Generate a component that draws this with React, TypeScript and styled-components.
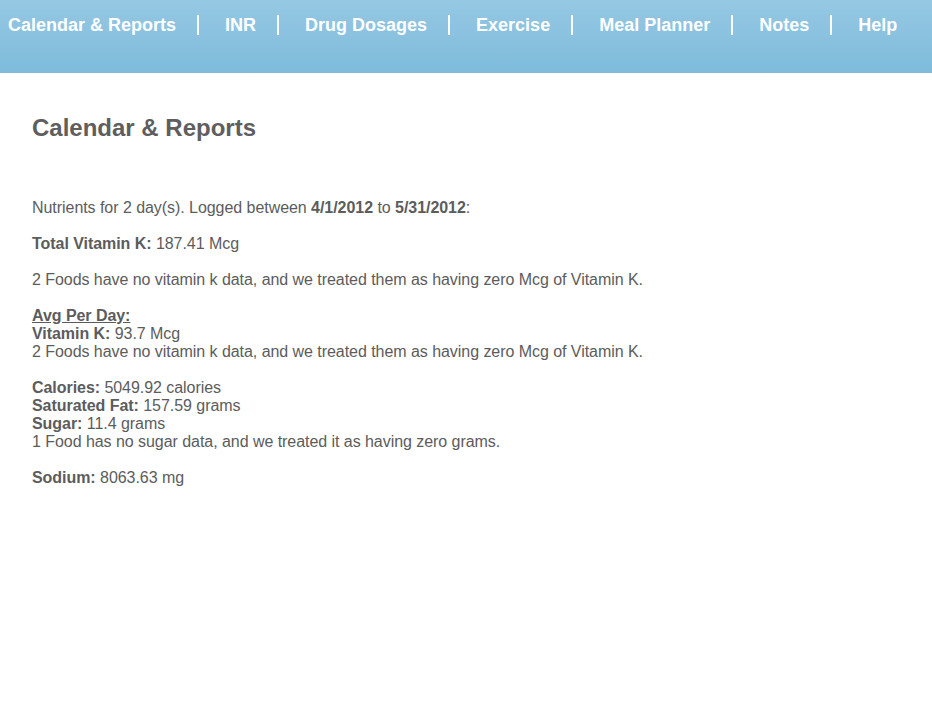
import React from "react";
import styled, { createGlobalStyle } from "styled-components";

const Global = createGlobalStyle`
  html, body { margin: 0; padding: 0; background: #ffffff; }
  body { font-family: "Liberation Sans", Arial, Helvetica, sans-serif; }
`;

const Header = styled.header`
  height: 73px;
  background: linear-gradient(to bottom, #95c8e3 0%, #7ebbdb 100%);
  box-sizing: border-box;
  padding: 15px 0 0 8px;
`;

const Nav = styled.nav`
  display: flex;
  align-items: center;
  height: 20px;
`;

const NavItem = styled.a`
  color: #ffffff;
  font-size: 18px;
  font-weight: bold;
  line-height: 20px;
  text-decoration: none;
  white-space: nowrap;
`;

const Sep = styled.span`
  display: block;
  width: 2px;
  height: 20px;
  background: rgba(255, 255, 255, 0.95);
  margin: 0 26px 0 21px;
`;

const Content = styled.main`
  padding: 41px 32px 0 32px;
  color: #5c5c5c;
`;

const Title = styled.h1`
  margin: 0 0 57px 0;
  font-size: 24px;
  line-height: 28px;
  font-weight: bold;
  color: #5e5e5e;
`;

const Block = styled.div`
  font-size: 16px;
  line-height: 18px;
  margin-bottom: 18px;
  letter-spacing: -0.05px;
`;

const Line = styled.div``;

const Label = styled.b<{ $underline?: boolean }>`
  font-weight: bold;
  text-decoration: ${(p) => (p.$underline ? "underline" : "none")};
`;

const navItems = [
  "Calendar & Reports",
  "INR",
  "Drug Dosages",
  "Exercise",
  "Meal Planner",
  "Notes",
  "Help",
];

export default function App() {
  return (
    <>
      <Global />
      <Header>
        <Nav>
          {navItems.map((n, i) => (
            <React.Fragment key={n}>
              {i > 0 && <Sep />}
              <NavItem href="#">{n}</NavItem>
            </React.Fragment>
          ))}
        </Nav>
      </Header>
      <Content>
        <Title>Calendar &amp; Reports</Title>
        <Block>
          Nutrients for 2 day(s). Logged between <Label>4/1/2012</Label> to{" "}
          <Label>5/31/2012</Label>:
        </Block>
        <Block>
          <Label>Total Vitamin K:</Label> 187.41 Mcg
        </Block>
        <Block>
          2 Foods have no vitamin k data, and we treated them as having zero Mcg of Vitamin K.
        </Block>
        <Block>
          <Line>
            <Label $underline>Avg Per Day:</Label>
          </Line>
          <Line>
            <Label>Vitamin K:</Label> 93.7 Mcg
          </Line>
          <Line>
            2 Foods have no vitamin k data, and we treated them as having zero Mcg of Vitamin K.
          </Line>
        </Block>
        <Block>
          <Line>
            <Label>Calories:</Label> 5049.92 calories
          </Line>
          <Line>
            <Label>Saturated Fat:</Label> 157.59 grams
          </Line>
          <Line>
            <Label>Sugar:</Label> 11.4 grams
          </Line>
          <Line>1 Food has no sugar data, and we treated it as having zero grams.</Line>
        </Block>
        <Block>
          <Label>Sodium:</Label> 8063.63 mg
        </Block>
      </Content>
    </>
  );
}
